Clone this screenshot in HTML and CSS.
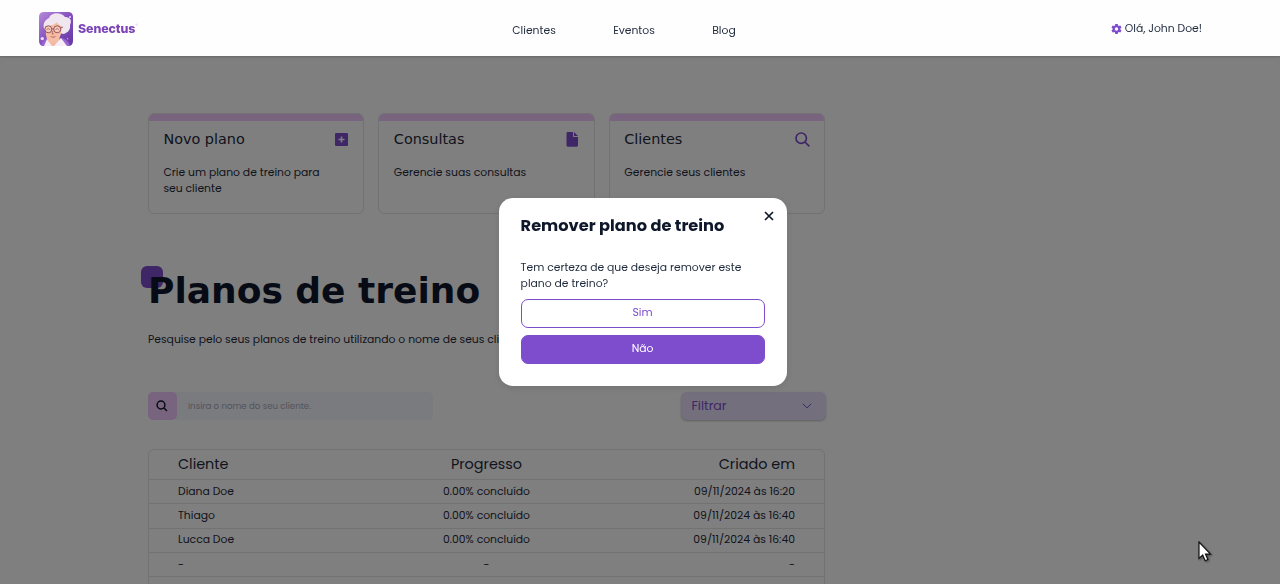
FILE: index.html
```html
<!DOCTYPE html>
<html lang="pt-BR">
<head>
<meta charset="utf-8">
<title>Senectus</title>
<link rel="stylesheet" href="styles.css">
</head>
<body>
<header class="header">
  <a class="brand">
    <svg class="portrait" viewBox="0 0 34 34">
      <defs>
        <linearGradient id="sky" x1="0" y1="0" x2="1" y2="1"><stop offset="0" stop-color="#b58adb"/><stop offset=".5" stop-color="#8350bd"/><stop offset="1" stop-color="#6438a5"/></linearGradient>
        <clipPath id="frame"><path d="M5 0h24q5 0 5 5v24q0 5-5 5H5q-5 0-5-5V5q0-5 5-5z"/></clipPath>
      </defs>
      <g clip-path="url(#frame)">
        <path d="M0 0h34v34H0z" fill="url(#sky)"/>
        <path d="M2 34q2-8 9-8h9q9 0 11 8z" fill="#9a65cc"/>
        <path d="M10 25h10l2 9H8z" fill="#efb9a4"/>
        <path d="M8 27l5 7H5zM22 26l6 8H15z" fill="#f7edf6"/>
        <path d="M6 18C3 14 5 8 10 6c2-6 12-6 16-1 6 0 7 4 5 8 1 6-4 8-6 9z" fill="#efe6ef"/>
        <path d="M6 14q9 0 12-4 1 3 5 4l-1 8q-3 9-8.500 9T7 23z" fill="#f5bda3"/>
        <path d="M10.500 24q3.500 1.500 7 0-3 3.600-7 0z" fill="#c9505c"/>
        <g fill="#f5c9b8" stroke="#8a4a55" stroke-width=".9"><circle cx="9.300" cy="17.300" r="3.500"/><circle cx="18.200" cy="17.300" r="3.500"/><path d="M12.800 17h2M21.700 16l2.300-1" fill="none"/></g>
        <path d="M7.600 17.500q1.700-1.600 3.400 0M16.500 17.500q1.700-1.600 3.400 0M13.700 19l-.7 3h2" fill="none" stroke="#a8605c" stroke-width=".8"/>
      </g>
      <circle cx="3.300" cy="26.600" r="1.700" fill="#eadaff"/><circle cx="31" cy="5" r="1" fill="#eadaff"/><circle cx="28.500" cy="26.700" r=".7" fill="#cba9ef"/>
    </svg>
    <span class="brand-name">Senectus</span><span class="brand-mark">®</span>
  </a>
  <nav class="nav"><a>Clientes</a><a>Eventos</a><a>Blog</a></nav>
  <div class="user">
    <svg class="gear" viewBox="0 0 24 24"><path fill-rule="evenodd" d="M9.300 1h5.400l.6 3.200 1.900 1.100 3.100-1.100L23 8.900l-2.500 2.100v2.100L23 15.200l-2.700 4.600-3.100-1.100-1.900 1.100-.6 3.200H9.300l-.6-3.200-1.900-1.100-3.100 1.100L1 15.200l2.500-2.100V11L1 8.900l2.700-4.700 3.100 1.100 1.900-1.100zM12 8.300a3.700 3.700 0 1 0 0 7.400 3.700 3.700 0 0 0 0-7.400z"/></svg>
    <span class="hello">Olá, John Doe!</span>
  </div>
</header>

<main class="page">
  <section class="cards">
    <article class="card">
      <div class="card-head"><h2>Novo plano</h2><svg class="ico" viewBox="0 0 15 15"><path fill-rule="evenodd" d="M2.200 1h10.600Q14 1 14 2.200v10.600q0 1.200-1.200 1.200H2.200Q1 14 1 12.800V2.200Q1 1 2.200 1zm4.550 3.500v2.250H4.500v1.500h2.250v2.250h1.500V8.250h2.250v-1.500H8.250V4.500z"/></svg></div>
      <p>Crie um plano de treino para<br>seu cliente</p>
    </article>
    <article class="card">
      <div class="card-head"><h2>Consultas</h2><svg class="ico" viewBox="0 0 15 15"><path d="M3.500 0H9v4.300q0 .7.700.7H14v8.300q0 1.400-1.400 1.400H3.900q-1.400 0-1.400-1.400V1.400Q2.500 0 3.500 0zM10 0l4 4h-4z"/></svg></div>
      <p>Gerencie suas consultas</p>
    </article>
    <article class="card">
      <div class="card-head"><h2>Clientes</h2><svg class="ico line" viewBox="0 0 15 15"><circle cx="6.200" cy="6.200" r="5.200"/><path d="M10 10l4.300 4.300"/></svg></div>
      <p>Gerencie seus clientes</p>
    </article>
  </section>

  <h1 class="title">Planos de treino</h1>
  <p class="lead">Pesquise pelo seus planos de treino utilizando o nome de seus clientes.</p>

  <div class="tools">
    <div class="search">
      <span class="search-btn"><svg viewBox="0 0 12 12"><circle cx="5" cy="5" r="3.900"/><path d="M8 8l3 3"/></svg></span>
      <span class="placeholder">Insira o nome do seu cliente.</span>
    </div>
    <div class="filter"><span class="filter-text">Filtrar</span><svg viewBox="0 0 10 6"><path d="M.8.800L5 4.900 9.200.8"/></svg></div>
  </div>

  <div class="table">
    <div class="row head"><span>Cliente</span><span>Progresso</span><span>Criado em</span></div>
    <div class="row"><span>Diana Doe</span><span>0.00% concluído</span><span>09/11/2024 às 16:20</span></div>
    <div class="row tall"><span>Thiago</span><span>0.00% concluído</span><span>09/11/2024 às 16:40</span></div>
    <div class="row up"><span>Lucca Doe</span><span>0.00% concluído</span><span>09/11/2024 às 16:40</span></div>
    <div class="row"><span>-</span><span>-</span><span>-</span></div>
  </div>
</main>

<div class="overlay">
  <section class="modal">
    <svg class="close" viewBox="0 0 10 10"><path d="M1 1l8 8M9 1L1 9"/></svg>
    <h3 class="m-title">Remover plano de treino</h3>
    <p class="m-text">Tem certeza de que deseja remover este<br>plano de treino?</p>
    <button class="btn">Sim</button>
    <button class="btn solid">Não</button>
  </section>
</div>
<svg class="cursor" viewBox="0 0 14 22"><path d="M1 1v16.500l3.700-3.400 2.500 5.600 2.700-1.200-2.400-5.400h5z"/></svg>
</body>
</html>
```
FILE: styles.css
```css
* { box-sizing: border-box; margin: 0; padding: 0; }
html { font-size: 14.4px; }
body { height: 584px; overflow: hidden; background: #fefefe; color: #1e293b; font: 10.8px/16px Poppins, Inter, sans-serif; white-space: nowrap; }
.header { position: relative; z-index: 3; height: 56px; display: grid; grid-template-columns: 1fr auto 1fr; align-items: center; padding: 0 78px 0 39px; background: #fefefe; box-shadow: 0 1px 2px rgba(0,0,0,.2); }
.brand { display: flex; align-items: center; padding-top: 1px; color: #7b43b7; }
.portrait { width: 34px; height: 34px; margin-right: 5px; }
.brand-name { font-family: Inter, sans-serif; font-size: 12.400px; font-weight: 800; letter-spacing: -.1px; }
.brand-mark { font-size: 5px; line-height: 12px; align-self: flex-start; margin: 8px 0 0; color: #c9b3e6; }
.nav { display: flex; gap: 57.400px; padding-top: 5px; margin-left: 7px; }
.user { display: flex; justify-content: flex-end; align-items: center; gap: 3px; padding-top: 1px; }
.gear { width: 11px; height: 12px; fill: #7e4dcd; margin-top: 1px; }

.page { width: 677px; height: 527px; overflow: visible; margin: 57px 0 0 148px; }
.cards { display: grid; grid-template-columns: repeat(3, 1fr); gap: 14.400px; }
.card { height: 101px; border: 1px solid #e4e4e7; border-radius: 6px; overflow: hidden; }
.card::before { content: ""; display: block; height: 7px; background: #f3c8ff; }
.card-head { display: flex; justify-content: space-between; align-items: center; height: 36px; padding: 0 14.400px; }
.card h2 { font: 14.400px/20px "DejaVu Sans", sans-serif; }
.ico { width: 15px; height: 15px; fill: #7e4dcd; }
.line { fill: none; stroke: #7e4dcd; stroke-width: 1.700; }
.card p { padding: 7.500px 14.400px 0; }

.title { position: relative; margin-top: 50px; font: bold 36px/54px "DejaVu Sans", sans-serif; color: #0f172a; }
.title::before { content: ""; position: absolute; z-index: -1; left: -7px; top: 2px; width: 22px; height: 22px; border-radius: 6px; background: #7e4dcd; }
.lead { margin-top: 13.500px; }
.tools { display: flex; justify-content: space-between; margin-top: 44.500px; }
.search { display: flex; align-items: center; width: 285px; height: 28px; border-radius: 5px; background: #f5f6ff; }
.search-btn { display: flex; align-items: center; width: 29px; height: 28px; padding-left: 8px; border-radius: 5px; background: #f3c8ff; }
.search-btn svg { width: 12px; height: 12px; fill: none; stroke: #0f172a; stroke-width: 1.500; }
.placeholder { margin: -1px 0 0 11px; font-size: 8.640px; color: #a9a9b4; }
.filter { display: flex; align-items: center; justify-content: space-between; width: 145px; height: 28px; margin-right: -1px; padding: 0 14px 0 10.500px; border-radius: 6px; background: #e7defa; color: #7e4dcd; box-shadow: 0 1px 2px rgba(0,0,0,.25); }
.filter-text { font-size: 12.600px; }
.filter svg { width: 10px; height: 6px; fill: none; stroke: #7e4dcd; stroke-width: 1; }
.table { margin-top: 29px; border: 1px solid #e4e4e7; border-radius: 6px; height: 160px; }
.row { display: grid; grid-template-columns: 1fr 1fr 1fr; align-items: center; height: 24px; padding: 0 29px; border-bottom: 1px solid #e4e4e7; }
.row.tall { height: 25px; }
.row.up { padding-bottom: 1px; }
.row.head { height: 30px; padding-bottom: 2px; font-size: 14.400px; }
.row span:nth-child(2) { text-align: center; }
.row span:nth-child(3) { text-align: right; }

.overlay { position: fixed; inset: 0; z-index: 2; display: flex; align-items: center; justify-content: center; background: rgba(0,0,0,.5); }
.modal { position: relative; width: 288px; height: 188px; margin-left: 6px; padding: 17px 22px 0 21.600px; border-radius: 14px; background: #fff; color: #1e293b; box-shadow: 0 2px 8px rgba(0,0,0,.1); }
.close { position: absolute; right: 13px; top: 13px; width: 10px; height: 10px; stroke: #0f172a; stroke-width: 1.700; }
.m-title { font-size: 16.200px; font-weight: 700; line-height: 22px; color: #0f172a; }
.m-text { margin: 23px 0 7px; }
.btn { display: block; width: 244px; height: 29px; margin-bottom: 7px; padding-bottom: 2px; border: 1px solid #7e4dcd; border-radius: 7px; background: #fff; color: #7e4dcd; font: inherit; }
.solid { background: #7e4dcd; color: #fff; }
.cursor { position: fixed; z-index: 4; left: 1198px; top: 541px; width: 14px; height: 22px; fill: #fff; stroke: #111; stroke-width: 1.200; filter: drop-shadow(1px 1px 1px rgba(0,0,0,.4)); }
```
